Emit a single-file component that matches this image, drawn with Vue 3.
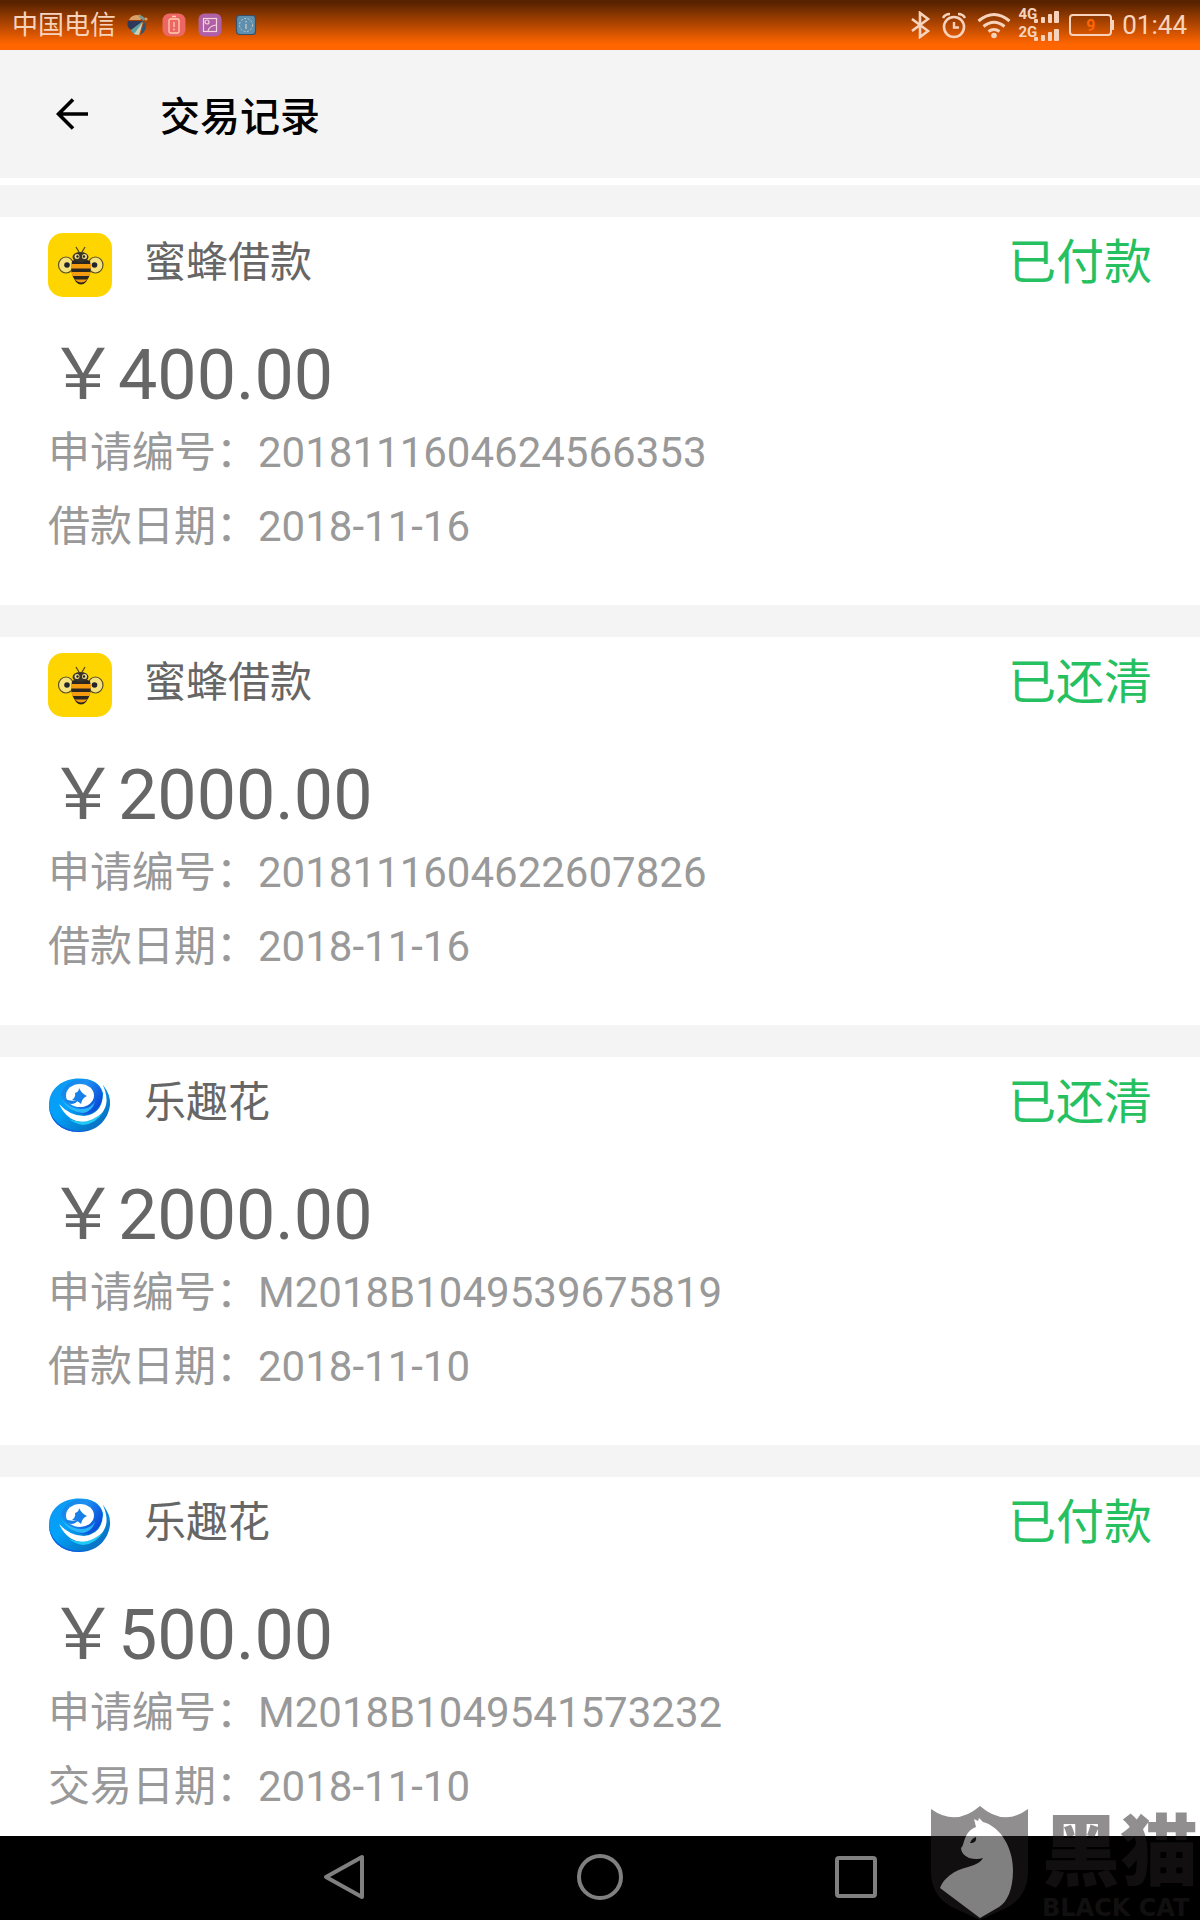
<script setup>
const records = [
  { brand: 'bee', name: '蜜蜂借款', status: '已付款', amount: '￥400.00', id: '2018111604624566353', dateLabel: '借款日期：', date: '2018-11-16' },
  { brand: 'bee', name: '蜜蜂借款', status: '已还清', amount: '￥2000.00', id: '2018111604622607826', dateLabel: '借款日期：', date: '2018-11-16' },
  { brand: 'swirl', name: '乐趣花', status: '已还清', amount: '￥2000.00', id: 'M2018B1049539675819', dateLabel: '借款日期：', date: '2018-11-10' },
  { brand: 'swirl', name: '乐趣花', status: '已付款', amount: '￥500.00', id: 'M2018B1049541573232', dateLabel: '交易日期：', date: '2018-11-10' },
]
</script>

<template>
  <div class="screen">
    <div class="statusbar">
      <div class="side left">
        <span class="carrier">中国电信</span>
        <svg width="24" height="24" viewBox="0 0 24 24">
          <path d="M3 7Q5 2 12 2l5 3-3 2z" fill="#dba068" />
          <path d="M2 8h11l5 0-13 9Q0 14 2 8z" fill="#2f3a5a" />
          <path d="M17 8 5 17q2 5 6 5z" fill="#5aa3a6" />
          <path d="m17 9-9 12 5 1z" fill="#d5cdb0" />
          <path d="m18 9-4 13q7-4 6-11z" fill="#2f5578" />
          <path d="m13 1 6 4-1 3-5-4z" fill="#6f9a98" />
          <circle cx="20" cy="6" r="1.5" fill="#dba068" />
        </svg>
        <svg width="24" height="24" viewBox="0 0 24 24" fill="none" stroke="#ffcfb4" stroke-width="1.3">
          <rect x=".5" y=".5" width="23" height="23" rx="7" fill="#ec6763" stroke="none" />
          <rect x="7" y="6" width="10" height="14" rx="1.5" />
          <path d="M10 3.500h4M12 9v5M12 15.500v2" />
        </svg>
        <svg width="24" height="24" viewBox="0 0 24 24" fill="none" stroke="#f5d3d6" stroke-width="1.2">
          <rect x=".5" y=".5" width="23" height="23" rx="6" fill="#b060a8" stroke="none" />
          <rect x="5.5" y="5.5" width="13" height="13" />
          <circle cx="9" cy="9" r="2" />
          <path d="M10 18q1-5 8-6M7 18" />
        </svg>
        <svg width="24" height="24" viewBox="0 0 24 24" fill="none" stroke="#d4cfc4" stroke-width="1.2">
          <rect x="2.5" y="2.5" width="19" height="19" rx="3" fill="#5e8fae" stroke="#34506a" />
          <circle cx="12" cy="12" r="6.5" stroke-width="0.8" stroke-dasharray="2 1.5" />
          <path d="M12 8v1.500M12 11v5" />
        </svg>
      </div>
      <div class="side right">
        <svg width="20" height="28" viewBox="0 0 20 28" fill="none" stroke="#f7d3bd" stroke-width="2.6">
          <path d="M1 8 17 20l-8 6V2l8 6L1 20" />
        </svg>
        <svg width="26" height="28" viewBox="0 0 26 28" fill="none" stroke="#f7d3bd">
          <circle cx="13" cy="16" r="10" stroke-width="2.6" />
          <path d="M13 11v5.500h5" stroke-width="2.4" />
          <path d="M2 7q2-4 7-4M24 7q-2-4-7-4" stroke-width="2.4" />
        </svg>
        <svg width="34" height="28" viewBox="0 0 34 28" fill="none" stroke="#f7d3bd" stroke-width="3">
          <path d="M1.500 10Q17-3 32.500 10M6.500 15.500q10.500-8.500 21 0M11.500 20.500q5.500-4 11 0" />
          <circle cx="17" cy="24.5" r="2.8" fill="#f7d3bd" stroke="none" />
        </svg>
        <div class="signals">
          <div class="signal" v-for="net in ['4G', '2G']" :key="net">
            <span>{{ net }}</span>
            <svg width="26" height="13" viewBox="0 0 26 13" fill="#f7d3bd">
              <rect x="1" y="8" width="4" height="4" rx="1" />
              <rect x="8" y="6" width="4" height="6" rx="1" />
              <rect x="15" y="3" width="4" height="9" rx="1" />
              <rect x="21" y="0" width="5" height="12" rx="1" />
            </svg>
          </div>
        </div>
        <div class="battery">9</div>
        <span class="time">01:44</span>
      </div>
    </div>

    <header class="titlebar">
      <button class="back" type="button" aria-label="返回">
        <svg width="32" height="32" viewBox="0 0 32 32" fill="none" stroke="#000" stroke-width="3.6">
          <path d="M32 16H3M17 1.500 2.500 16 17 30.500" />
        </svg>
      </button>
      <h1>交易记录</h1>
    </header>

    <main class="list">
      <article class="record" v-for="(r, i) in records" :key="i">
        <div class="head">
          <svg v-if="r.brand === 'bee'" class="logo" width="64" height="64" viewBox="0 0 64 64">
            <rect width="64" height="64" rx="15" fill="#ffd500" />
            <path d="m28 14 3 5M37 14l-3 5" stroke="#5b4a20" stroke-width="1.3" fill="none" />
            <g fill="#f7e27a" stroke="#5c5224" stroke-width="1.2">
              <ellipse cx="18" cy="32" rx="7.5" ry="8" />
              <ellipse cx="47.5" cy="32" rx="7.5" ry="8" />
            </g>
            <circle cx="19" cy="32" r="2.8" fill="#22242c" />
            <circle cx="46.5" cy="32" r="2.8" fill="#22242c" />
            <path d="M24 28q8.500-5 18 0 3 12-4 21-5 5-10 0-7-9-4-21z" fill="#2b2620" />
            <path d="M23 31h20v4.500H23zM23.500 39h19l-1 4h-17zM26.500 46.500h13q-6 6-13 0z" fill="#f59b10" />
            <ellipse cx="32.5" cy="24" rx="8" ry="5" fill="#3a3428" />
            <circle cx="29" cy="23.5" r="2.5" fill="#f0de90" />
            <circle cx="36.5" cy="23.5" r="2.5" fill="#f0de90" />
            <circle cx="29.5" cy="23.5" r="1.2" fill="#222" />
            <circle cx="36" cy="23.5" r="1.2" fill="#222" />
          </svg>
          <svg v-else class="logo" width="64" height="64" viewBox="0 0 64 64">
            <defs>
              <linearGradient id="swirl-a" x1="0" y1="0" x2="1" y2="1">
                <stop offset="0" stop-color="#1397f2" />
                <stop offset=".4" stop-color="#00a2fa" />
                <stop offset=".8" stop-color="#0876c6" />
                <stop offset="1" stop-color="#1456e0" />
              </linearGradient>
              <linearGradient id="swirl-b" x1="0" y1="0" x2="1" y2=".6">
                <stop offset="0" stop-color="#1183e4" />
                <stop offset=".5" stop-color="#1d90f2" />
                <stop offset="1" stop-color="#0b4cd8" />
              </linearGradient>
            </defs>
            <path d="M55 12Q63 22 62 32C60 48 48 59 31 59 13 59 1 47 1 32 1 15 15 5.500 31 5.500 44 5.500 52 10 55 20z" fill="url(#swirl-a)" />
            <path d="M1 32Q2 46 15 54q14 7 28 2-6 3-12 3C13 59 1 47 1 32z" fill="#1058e4" />
            <path d="M11 31Q22 43 36 43 54 41 55 22V12q5 12 3 20Q54 46 38 49 20 50 11 31z" fill="#fff" />
            <path d="M21 46q18 8 34-7-7 12-20 13-8-1-14-6z" fill="#22c8f4" />
            <path d="M13 22Q17 7 35 6q18 2 19.500 16Q54 37 40 41.500 24 43 13 22z" fill="url(#swirl-b)" />
            <path d="M14 27Q22 36 34 36q10-1 13-8-2 10-12 12-14-1-21-13z" fill="#2bb8f8" />
            <ellipse cx="32" cy="22.5" rx="14" ry="11.5" fill="#fff" />
            <path d="M31 15q3 6 8 8-5 2-6 8-4-4-9-4 4-3 3-7 4-1 4-5z" fill="#1780e8" />
            <path d="M17 26q6 3 13 1-2 4-7 4-4-1-6-5z" fill="#1780e8" />
          </svg>
          <h2>{{ r.name }}</h2>
          <span class="status">{{ r.status }}</span>
        </div>
        <p class="amount">{{ r.amount }}</p>
        <dl>
          <div><dt>申请编号：</dt><dd>{{ r.id }}</dd></div>
          <div><dt>{{ r.dateLabel }}</dt><dd>{{ r.date }}</dd></div>
        </dl>
      </article>
    </main>

    <nav class="softkeys">
      <button type="button" aria-label="返回">
        <svg width="48" height="48" viewBox="0 0 48 48"><path d="M42 3v40L6 23z" /></svg>
      </button>
      <button type="button" aria-label="主屏幕">
        <svg width="48" height="48" viewBox="0 0 48 48"><circle cx="24" cy="23" r="21" /></svg>
      </button>
      <button type="button" aria-label="最近任务">
        <svg width="48" height="48" viewBox="0 0 48 48"><rect x="5" y="4" width="38" height="38" rx="2" /></svg>
      </button>
    </nav>

    <div class="watermark">
      <svg width="98" height="114" viewBox="0 0 98 114">
        <path d="M0 3q25 18 49-3 24 21 48 3v66q-2 24-24 34l-24 11-24-11Q2 93 0 69z" fill="#231f20" />
        <path d="M45 21 43 13l4 2 1-3 4 4c18 5 30 26 30 48 0 20-6 32-14 37l-19 11L9 82c3-9 14-18 28-21q12-3 15-9-6 2-14 0-8-4-8-10c4-3 2-16 15-21z" fill="#fff" />
        <path d="M39 37q2-5 6-6 1 5-4 6z" fill="#231f20" />
      </svg>
      <div class="wordmark">
        <span class="zh">黑猫</span>
        <span class="en">BLACK CAT</span>
      </div>
    </div>
  </div>
</template>

<style>
body {
  margin: 0;
}
</style>

<style scoped>
.screen {
  position: relative;
  display: flex;
  flex-direction: column;
  height: 100vh;
  overflow: hidden;
  background: #fff;
  font-family: Roboto, "Noto Sans CJK SC", sans-serif;
}
h1, h2, p, dl, dd {
  margin: 0;
  font-weight: 400;
}
button {
  padding: 0;
  border: 0;
  background: none;
}
svg {
  display: block;
  flex: none;
}
.statusbar {
  display: flex;
  flex: none;
  justify-content: space-between;
  height: 50px;
  padding: 0 13px 0 12px;
  background: linear-gradient(#562200 2px, #ff6500 44px);
  color: #f7d3bd;
  font-size: 26px;
}
.side {
  display: flex;
  align-items: center;
}
.left {
  gap: 12px;
}
.carrier {
  margin-right: -2px;
  line-height: 52px;
}
.right {
  gap: 10px;
}
.signals {
  display: flex;
  flex-direction: column;
  gap: 2px;
  margin-left: -3px;
}
.signal {
  display: flex;
  align-items: flex-end;
  height: 16px;
  font-size: 15px;
  font-weight: 700;
  line-height: 12px;
}
.signal span {
  align-self: flex-start;
  margin-right: -4px;
}
.battery {
  position: relative;
  box-sizing: border-box;
  width: 43px;
  height: 22px;
  border: 2px solid #f7d3bd;
  border-radius: 4px;
  color: #ff6500;
  font-size: 16px;
  font-weight: 700;
  line-height: 19px;
  text-align: center;
}
.battery::after {
  content: "";
  position: absolute;
  top: 4px;
  right: -4px;
  width: 3px;
  height: 10px;
  background: #f7d3bd;
}
.titlebar {
  display: flex;
  flex: none;
  align-items: center;
  height: 128px;
  padding: 0 56px;
  background: #f4f4f4;
}
.back {
  margin-right: 72px;
}
h1 {
  font-size: 40px;
  font-weight: 500;
  color: #000;
}
.list {
  flex: 1;
  min-height: 0;
  margin-top: 7px;
  overflow: hidden;
}
.record {
  padding: 16px 48px 41px;
  border-top: 32px solid #f4f4f4;
  color: #666;
}
.head {
  display: flex;
  height: 64px;
  margin-bottom: 37px;
  line-height: 60px;
}
.logo {
  margin-right: 32px;
}
h2 {
  font-size: 42px;
}
.status {
  margin-left: auto;
  color: #25c161;
  font-size: 48px;
}
.amount {
  font-size: 70px;
  line-height: 82px;
}
dl div {
  display: flex;
  color: #999;
  font-size: 42px;
  line-height: 74px;
}
.softkeys {
  display: grid;
  flex: none;
  grid-template-columns: repeat(3, 1fr);
  place-items: center;
  height: 84px;
  padding: 0 18%;
  background: #000;
}
.softkeys svg {
  fill: none;
  stroke: #808080;
  stroke-width: 4;
  stroke-linejoin: round;
}
.watermark {
  position: absolute;
  right: 0;
  bottom: 0;
  display: flex;
  gap: 13px;
  opacity: 0.5;
  color: #231f20;
}
.wordmark {
  display: flex;
  flex-direction: column;
  width: 158px;
  padding-top: 6px;
  font-weight: 900;
  white-space: nowrap;
}
.zh {
  font-size: 78px;
  line-height: 84px;
}
.en {
  font-family: "DejaVu Sans", sans-serif;
  font-size: 24px;
  font-weight: 700;
  line-height: 24px;
}
</style>
